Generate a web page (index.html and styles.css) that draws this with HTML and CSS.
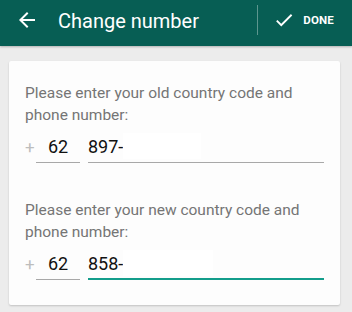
FILE: index.html
```html
<!DOCTYPE html>
<html>
<head>
<meta charset="utf-8">
<link rel="stylesheet" href="styles.css">
</head>
<body>
<header class="bar">
  <svg class="back" width="24" height="24" viewBox="0 0 24 24"><path d="M20 11H7.83l5.59-5.59L12 4l-8 8 8 8 1.41-1.41L7.83 13H20v-2z" fill="#fff"/></svg>
  <div class="title">Change number</div>
  <div class="divider"></div>
  <div class="done">
    <svg width="22" height="22" viewBox="0 0 24 24"><path d="M9 16.17L4.83 12l-1.42 1.41L9 19 21 7l-1.41-1.41z" fill="#fff"/></svg>
    <span>DONE</span>
  </div>
</header>
<main class="card">
  <section class="group">
    <p class="label">Please enter your old country code and phone number:</p>
    <div class="row">
      <span class="plus">+</span>
      <div class="field code">62</div>
      <div class="field phone">897-<span class="mask"></span></div>
    </div>
  </section>
  <section class="group second">
    <p class="label">Please enter your new country code and phone number:</p>
    <div class="row">
      <span class="plus">+</span>
      <div class="field code">62</div>
      <div class="field phone active">858-<span class="mask wide"></span></div>
    </div>
  </section>
</main>
</body>
</html>
```
FILE: styles.css
```css
html, body { margin: 0; padding: 0; }
body {
  width: 352px; height: 312px; overflow: hidden;
  background: #ececec;
  font-family: Roboto, "Noto Sans", sans-serif;
}
.bar {
  height: 46px; background: #075e54;
  display: flex; align-items: center;
  box-shadow: 0 1px 2px rgba(0,0,0,0.25);
}
.back { margin-left: 15px; margin-top: -6px; }
.title { color: #fff; font-size: 20px; margin-left: 19px; margin-top: -5px; flex: 1; }
.divider { width: 1px; height: 30px; background: rgba(255,255,255,0.35); margin-top: -6px; }
.done { display: flex; align-items: center; margin-left: 15px; margin-right: 18px; margin-top: -6px; color: #fff; }
.done span { font-size: 11.5px; font-weight: bold; margin-left: 8px; letter-spacing: 0.2px; }
.card {
  margin: 15px 12px 0 9px;
  background: #fdfdfd;
  border-radius: 2px;
  box-shadow: 0 1px 2px rgba(0,0,0,0.18);
  padding: 21px 16px 25px 16px;
}
.label {
  margin: 0; color: #757575; font-size: 15.5px; line-height: 22px;
}
.row { display: flex; align-items: flex-end; margin-top: 4px; }
.plus { color: #bdbdbd; font-size: 17px; width: 11px; margin-bottom: 6px; }
.field {
  font-size: 18px; color: #111; height: 33px; line-height: 33px;
  border-bottom: 1px solid #a8a8a8; box-sizing: border-box;
  display: flex;
}
.code { width: 44px; justify-content: center; }
.phone { width: 236px; margin-left: 8px; padding-left: 0; }
.phone.active { border-bottom: 2px solid #139d8b; }
.mask { display: inline-block; width: 78px; height: 26px; background: #fff; margin-top: 3px; }
.mask.wide { width: 90px; }
.second { margin-top: 36px; }
```
